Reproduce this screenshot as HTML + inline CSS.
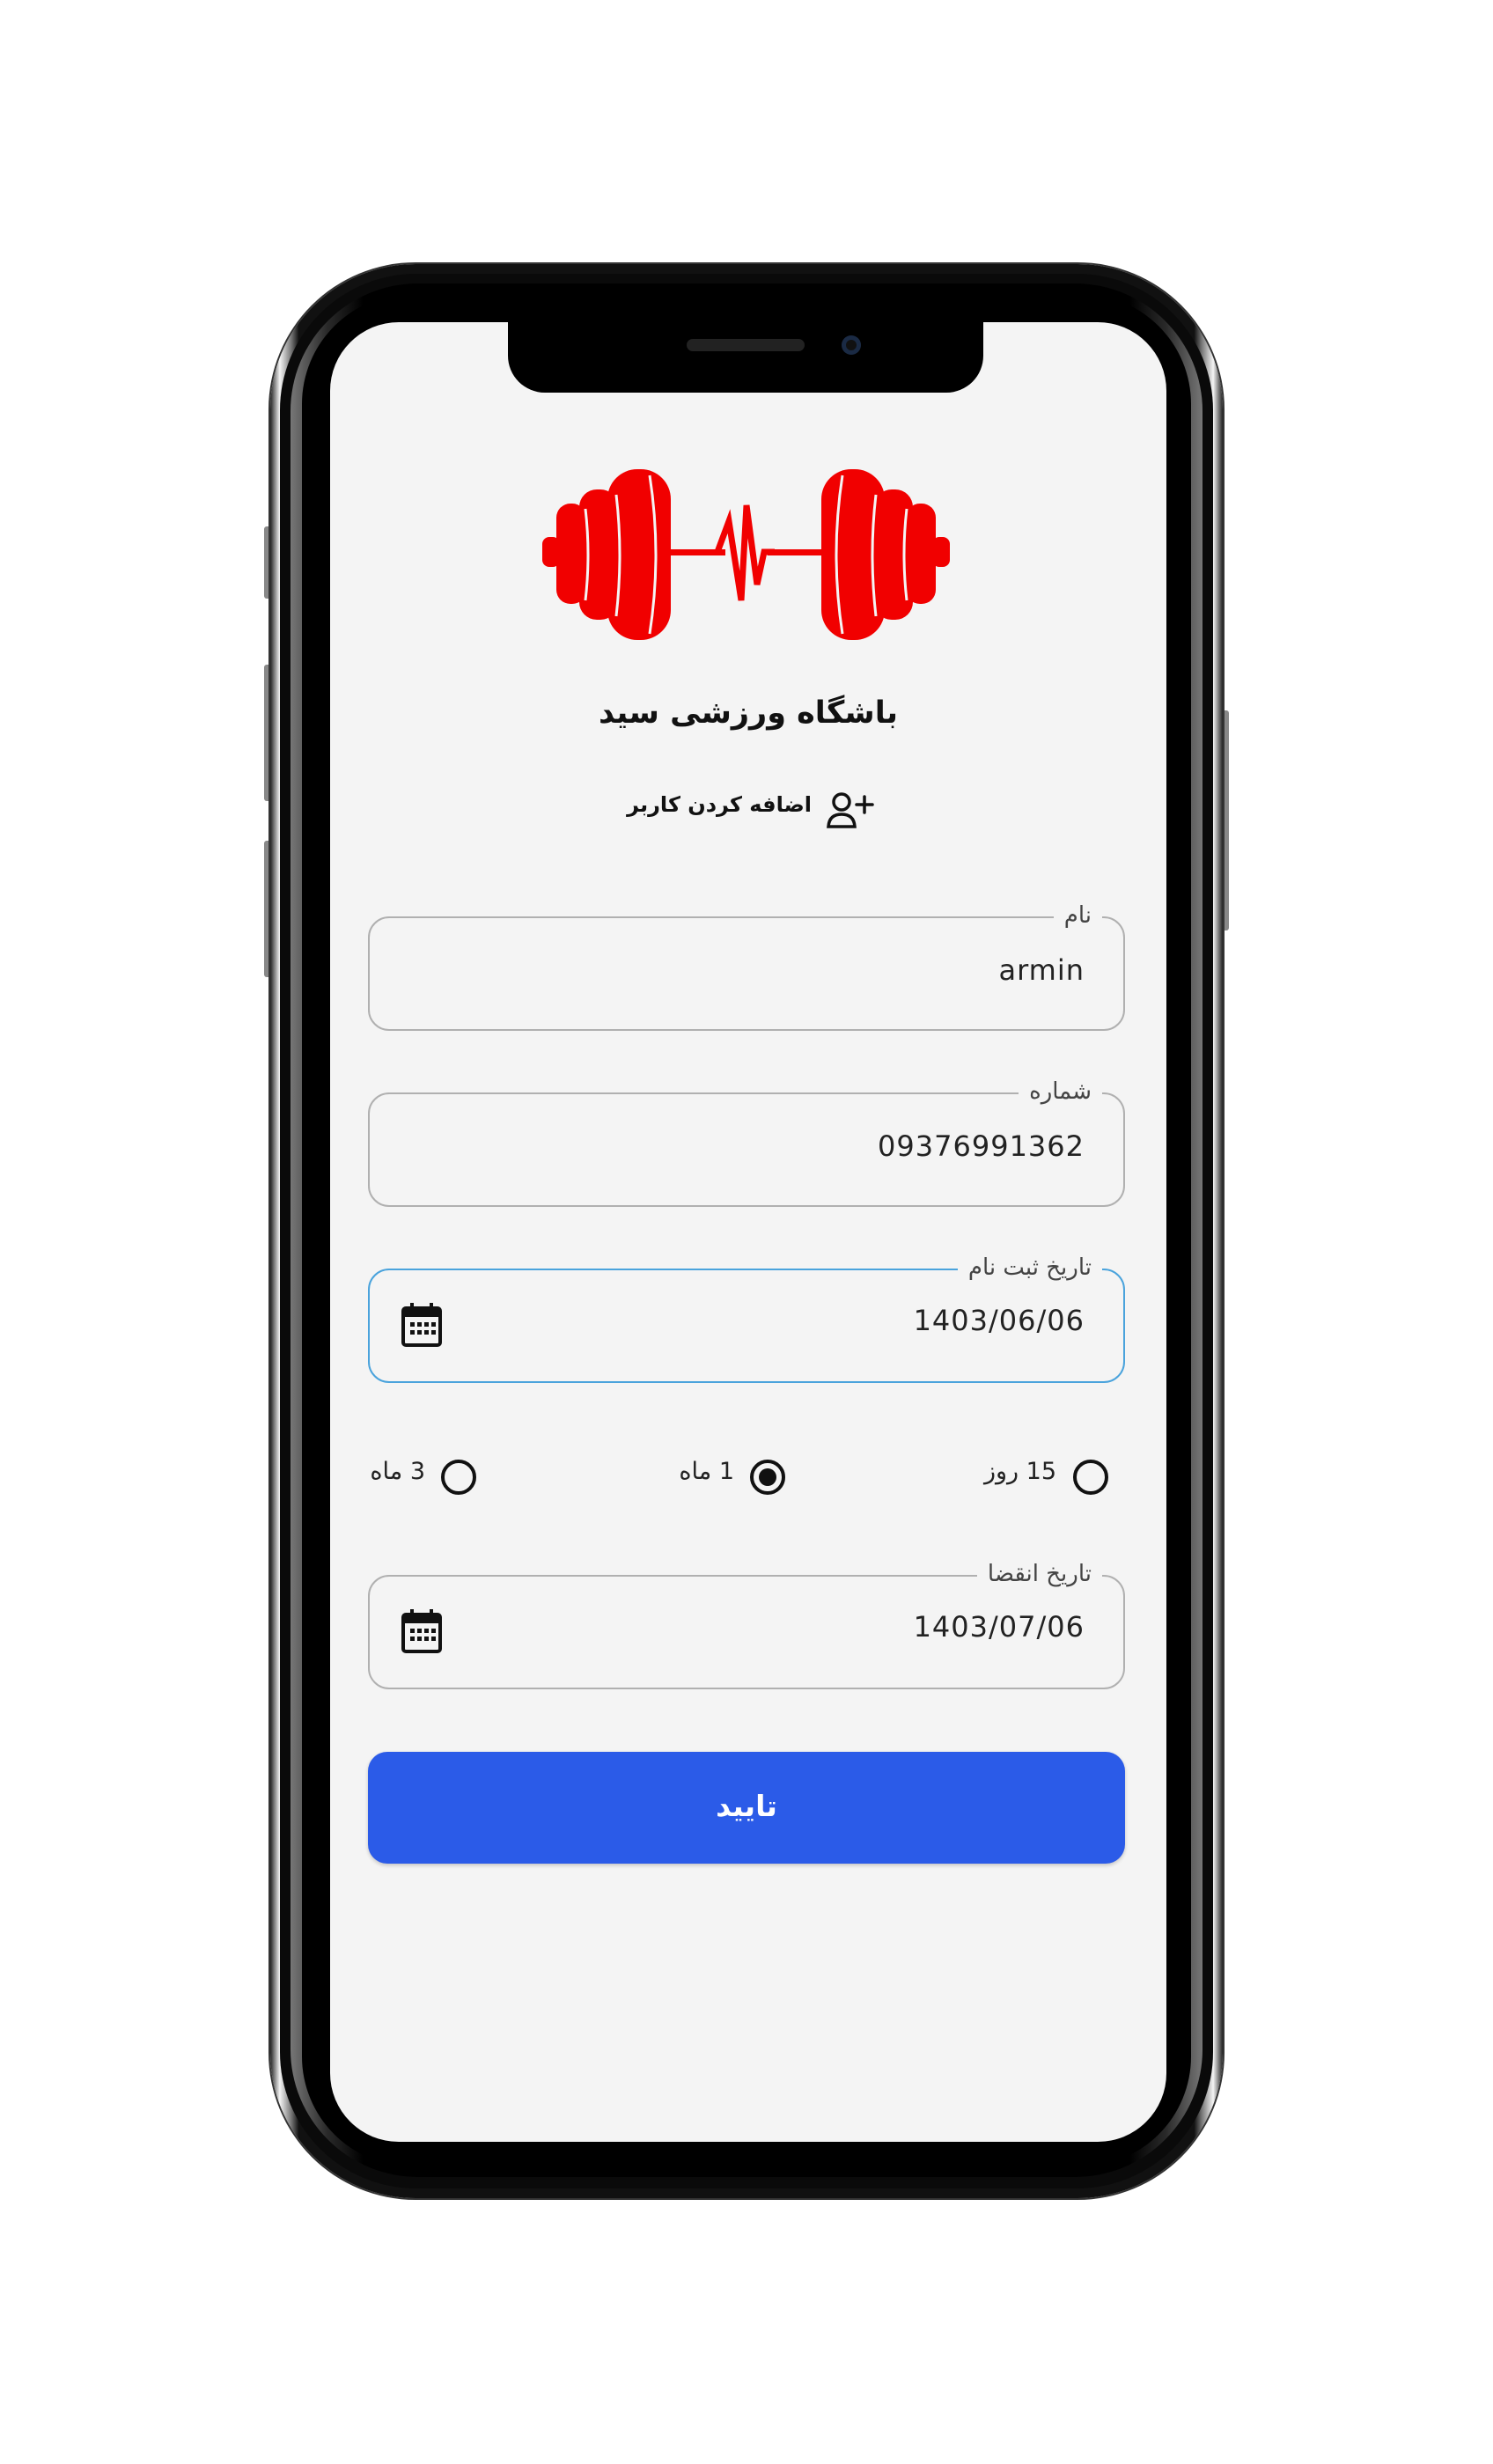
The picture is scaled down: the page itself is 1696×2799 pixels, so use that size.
<!DOCTYPE html>
<html><head><meta charset="utf-8"><style>
html,body{margin:0;padding:0;background:#fff;}
body{width:1696px;height:2799px;position:relative;overflow:hidden;font-family:"Liberation Sans","DejaVu Sans",sans-serif;}
.a{position:absolute;}
.rim{left:307px;top:300px;width:1082px;height:2197px;border-radius:165px;background:linear-gradient(90deg,#222 0%,#f4f4f4 1%,#777 2.2%,#111 3%,#111 97%,#777 97.8%,#f4f4f4 99%,#222 100%);box-shadow:0 0 0 2px #333;}
.rim2{left:318px;top:311px;width:1060px;height:2175px;border-radius:155px;background:#0a0a0a;}
.rim3{left:330px;top:322px;width:1036px;height:2151px;border-radius:145px;background:linear-gradient(90deg,#777,#2a2a2a 4%,#000 8%,#000 92%,#2a2a2a 96%,#777);}
.bez{left:343px;top:334px;width:1010px;height:2127px;border-radius:125px;background:#000;}
.screen{left:375px;top:366px;width:950px;height:2067px;border-radius:78px;background:#f4f4f4;overflow:hidden;}
.notch{left:577px;top:366px;width:540px;height:80px;background:#000;border-radius:0 0 42px 42px;}
.btn{background:#888;border-radius:3px;}
.field{left:418px;width:860px;height:130px;border:2.5px solid #b0b0b0;border-radius:24px;box-sizing:border-box;}
.lbl{background:#f4f4f4;padding:0 12px;font-size:26px;color:#444;font-family:"DejaVu Sans",sans-serif;line-height:30px;}
.val{font-size:32px;color:#222;letter-spacing:1px;font-family:"DejaVu Sans",sans-serif;}
.rad{width:40px;height:40px;border:4px solid #111;border-radius:50%;box-sizing:border-box;}
.rt{font-size:27px;color:#222;font-family:"DejaVu Sans",sans-serif;}
</style></head><body>
<div class="a btn" style="left:300px;top:598px;width:8px;height:82px"></div>
<div class="a btn" style="left:300px;top:755px;width:8px;height:155px"></div>
<div class="a btn" style="left:300px;top:955px;width:8px;height:155px"></div>
<div class="a btn" style="left:1388px;top:807px;width:8px;height:250px"></div>
<div class="a rim"></div>
<div class="a rim2"></div>
<div class="a rim3"></div>
<div class="a bez"></div>
<div class="a screen"></div>
<div class="a notch"></div>
<div class="a" style="left:780px;top:385px;width:134px;height:14px;border-radius:7px;background:#222"></div>
<div class="a" style="left:956px;top:381px;width:22px;height:22px;border-radius:50%;background:#111;box-shadow:inset 0 0 0 5px #1a2a44"></div>

<svg class="a" style="left:0;top:0" width="1696" height="900">
 <g fill="#f10000">
  <rect x="616" y="610" width="20" height="34" rx="8"/>
  <rect x="632" y="572" width="34" height="114" rx="16"/>
  <rect x="658" y="556" width="44" height="148" rx="20"/>
  <rect x="690" y="533" width="72" height="194" rx="34"/>
  <rect x="760" y="624" width="64" height="7"/>
  <rect x="872" y="624" width="64" height="7"/>
  <polyline points="815,627 828,592 842,682 848,574 860,664 868,627 880,627" fill="none" stroke="#f10000" stroke-width="7" stroke-linejoin="miter"/>
  <rect x="1059" y="610" width="20" height="34" rx="8"/>
  <rect x="1029" y="572" width="34" height="114" rx="16"/>
  <rect x="993" y="556" width="44" height="148" rx="20"/>
  <rect x="933" y="533" width="72" height="194" rx="34"/>
 </g>
 <g fill="none" stroke="#f4f4f4" stroke-width="3">
  <path d="M738 540 Q752 630 738 720"/>
  <path d="M700 562 Q708 630 700 700"/>
  <path d="M665 578 Q671 630 665 682"/>
  <path d="M957 540 Q943 630 957 720"/>
  <path d="M995 562 Q987 630 995 700"/>
  <path d="M1030 578 Q1024 630 1030 682"/>
 </g>
</svg>

<div class="a" style="left:375px;width:950px;top:790px;text-align:center;font-family:'DejaVu Sans',sans-serif;font-weight:bold;font-size:35px;color:#111" dir="rtl">باشگاه ورزشی سید</div>
<div class="a" style="left:600px;width:322px;top:900px;text-align:right;font-family:'DejaVu Sans',sans-serif;font-weight:bold;font-size:24px;color:#111" dir="rtl">اضافه کردن کاربر</div>
<svg class="a" style="left:938px;top:897px" width="58" height="48" viewBox="0 0 58 48" fill="none" stroke="#111" stroke-width="3.5" stroke-linecap="round">
 <circle cx="18" cy="14" r="9"/>
 <path d="M3 42 Q4 28 18 28 Q32 28 33 42 Z"/>
 <path d="M44 8 V26 M35 17 H53"/>
</svg>

<div class="a field" style="top:1041px"></div>
<div class="a lbl" style="right:444px;top:1025px" dir="rtl">نام</div>
<div class="a val" style="right:464px;top:1083px">armin</div>

<div class="a field" style="top:1241px"></div>
<div class="a lbl" style="right:444px;top:1225px" dir="rtl">شماره</div>
<div class="a val" style="right:464px;top:1283px">09376991362</div>

<div class="a field" style="top:1441px;border-color:#4aa3dc"></div>
<div class="a lbl" style="right:444px;top:1425px" dir="rtl">تاریخ ثبت نام</div>
<div class="a val" style="right:464px;top:1481px">1403/06/06</div>

<div class="a rad" style="left:1219px;top:1658px"></div>
<div class="a rt" style="right:496px;top:1656px" dir="rtl">15 روز</div>
<div class="a rad" style="left:852px;top:1658px"></div>
<div class="a" style="left:862px;top:1668px;width:20px;height:20px;border-radius:50%;background:#111"></div>
<div class="a rt" style="right:862px;top:1656px" dir="rtl">1 ماه</div>
<div class="a rad" style="left:501px;top:1658px"></div>
<div class="a rt" style="right:1213px;top:1656px" dir="rtl">3 ماه</div>

<div class="a field" style="top:1789px"></div>
<div class="a lbl" style="right:444px;top:1773px" dir="rtl">تاریخ انقضا</div>
<div class="a val" style="right:464px;top:1829px">1403/07/06</div>

<svg class="a" style="left:455px;top:1478px" width="48" height="54" viewBox="0 0 48 54">
 <rect x="3" y="8" width="42" height="42" rx="3" fill="none" stroke="#111" stroke-width="4"/>
 <rect x="3" y="8" width="42" height="10" fill="#111"/>
 <rect x="11" y="2" width="4" height="10" fill="#111"/><rect x="33" y="2" width="4" height="10" fill="#111"/>
 <g fill="#111"><rect x="11" y="24" width="5" height="5"/><rect x="19" y="24" width="5" height="5"/><rect x="27" y="24" width="5" height="5"/><rect x="35" y="24" width="5" height="5"/>
 <rect x="11" y="33" width="5" height="5"/><rect x="19" y="33" width="5" height="5"/><rect x="27" y="33" width="5" height="5"/><rect x="35" y="33" width="5" height="5"/></g>
</svg>
<svg class="a" style="left:455px;top:1826px" width="48" height="54" viewBox="0 0 48 54">
 <rect x="3" y="8" width="42" height="42" rx="3" fill="none" stroke="#111" stroke-width="4"/>
 <rect x="3" y="8" width="42" height="10" fill="#111"/>
 <rect x="11" y="2" width="4" height="10" fill="#111"/><rect x="33" y="2" width="4" height="10" fill="#111"/>
 <g fill="#111"><rect x="11" y="24" width="5" height="5"/><rect x="19" y="24" width="5" height="5"/><rect x="27" y="24" width="5" height="5"/><rect x="35" y="24" width="5" height="5"/>
 <rect x="11" y="33" width="5" height="5"/><rect x="19" y="33" width="5" height="5"/><rect x="27" y="33" width="5" height="5"/><rect x="35" y="33" width="5" height="5"/></g>
</svg>

<div class="a" style="left:418px;top:1990px;width:860px;height:127px;border-radius:22px;background:#2b5be8;box-shadow:0 2px 4px rgba(0,0,0,.2)"></div>
<div class="a" style="left:418px;top:2032px;width:860px;text-align:center;color:#fff;font-family:'DejaVu Sans',sans-serif;font-weight:bold;font-size:33px" dir="rtl">تایید</div>
</body></html>
